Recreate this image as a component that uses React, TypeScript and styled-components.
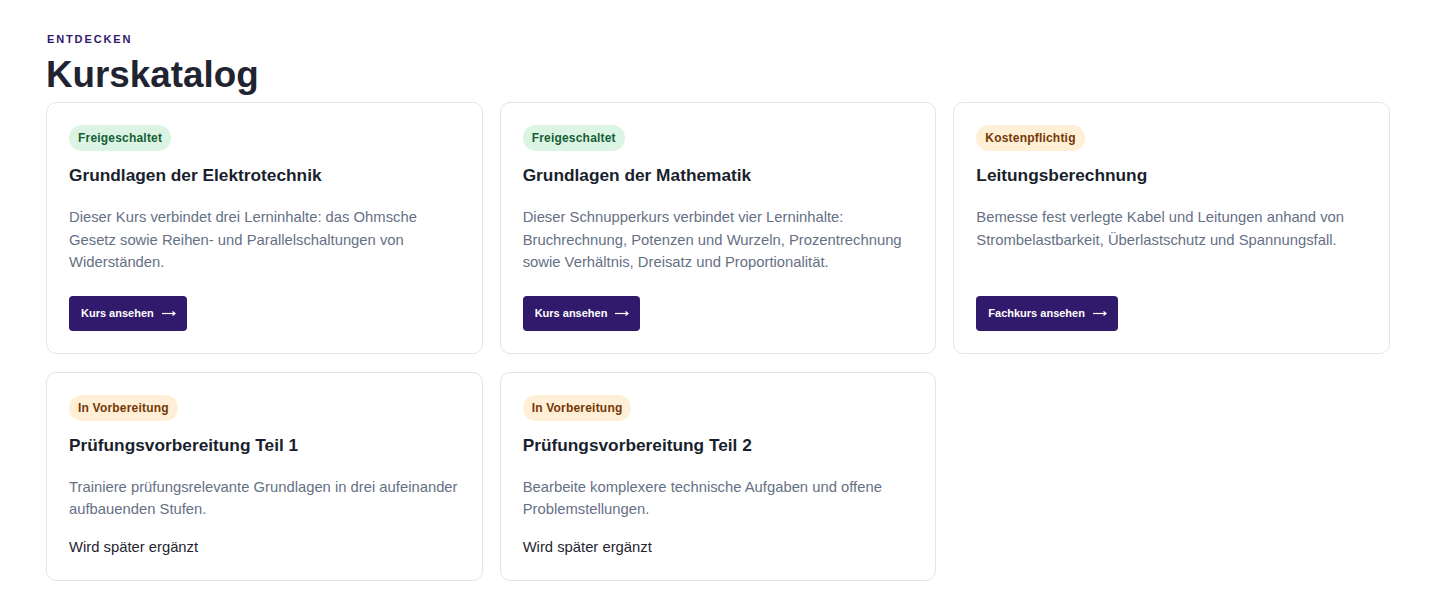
import styled, { createGlobalStyle } from 'styled-components';

type Status = 'open' | 'paid' | 'pending';

interface Course {
  title: string;
  status: Status;
  text: string;
  action?: string;
}

const statusLabel: Record<Status, string> = {
  open: 'Freigeschaltet',
  paid: 'Kostenpflichtig',
  pending: 'In Vorbereitung',
};

const courses: Course[] = [
  {
    title: 'Grundlagen der Elektrotechnik',
    status: 'open',
    text: 'Dieser Kurs verbindet drei Lerninhalte: das Ohmsche Gesetz sowie Reihen- und Parallelschaltungen von Widerständen.',
    action: 'Kurs ansehen',
  },
  {
    title: 'Grundlagen der Mathematik',
    status: 'open',
    text: 'Dieser Schnupperkurs verbindet vier Lerninhalte: Bruchrechnung, Potenzen und Wurzeln, Prozentrechnung sowie Verhältnis, Dreisatz und Proportionalität.',
    action: 'Kurs ansehen',
  },
  {
    title: 'Leitungsberechnung',
    status: 'paid',
    text: 'Bemesse fest verlegte Kabel und Leitungen anhand von Strombelastbarkeit, Überlastschutz und Spannungsfall.',
    action: 'Fachkurs ansehen',
  },
  {
    title: 'Prüfungsvorbereitung Teil 1',
    status: 'pending',
    text: 'Trainiere prüfungsrelevante Grundlagen in drei aufeinander aufbauenden Stufen.',
  },
  {
    title: 'Prüfungsvorbereitung Teil 2',
    status: 'pending',
    text: 'Bearbeite komplexere technische Aufgaben und offene Problemstellungen.',
  },
];

function ArrowIcon() {
  return (
    <svg width='14' height='8' viewBox='0 0 14 8' fill='none'>
      <path d='M0 4.5h12.5' stroke='currentColor' strokeWidth='1.2' />
      <path d='M10.5 2.5l2.5 2-2.5 2' stroke='currentColor' strokeWidth='1.2' fill='none' />
    </svg>
  );
}

function App() {
  return (
    <>
      <GlobalStyle />
      <Page>
        <Eyebrow>Entdecken</Eyebrow>
        <Heading>Kurskatalog</Heading>
        <Grid>
          {courses.map((course) => (
            <Card key={course.title}>
              <Badge $status={course.status}>{statusLabel[course.status]}</Badge>
              <Title>{course.title}</Title>
              <Description>{course.text}</Description>
              {course.action ? (
                <Footer>
                  <ActionButton type='button'>
                    {course.action}
                    <ArrowIcon />
                  </ActionButton>
                </Footer>
              ) : (
                <Note>Wird später ergänzt</Note>
              )}
            </Card>
          ))}
        </Grid>
      </Page>
    </>
  );
}

const GlobalStyle = createGlobalStyle`
  * {
    box-sizing: border-box;
  }
  body {
    margin: 0;
    background: #ffffff;
    font-family: 'Liberation Sans', Arial, sans-serif;
    color: #1c2130;
  }
`;

const Page = styled.main`
  width: 1344px;
  margin-left: 46px;
  padding-top: 32px;
`;

const Eyebrow = styled.div`
  padding-left: 1px;
  font-size: 11px;
  line-height: 14px;
  font-weight: 700;
  letter-spacing: 0.17em;
  text-transform: uppercase;
  color: #2e1a6b;
`;

const Heading = styled.h1`
  margin: 8px 0 6px;
  font-size: 36.8px;
  line-height: 42px;
  font-weight: 700;
  color: #1f2430;
`;

const Grid = styled.div`
  display: grid;
  grid-template-columns: repeat(3, 1fr);
  column-gap: 17px;
  row-gap: 18px;
`;

const Card = styled.article`
  display: flex;
  flex-direction: column;
  align-items: flex-start;
  padding: 22px;
  border: 1px solid #e3e5ea;
  border-radius: 10px;
  background: #ffffff;
`;

const badgeColors: Record<Status, { bg: string; fg: string }> = {
  open: { bg: '#dcf4e4', fg: '#155e34' },
  paid: { bg: '#feefd6', fg: '#733806' },
  pending: { bg: '#feefd6', fg: '#733806' },
};

const Badge = styled.span<{ $status: Status }>`
  display: inline-flex;
  align-items: center;
  height: 26px;
  padding: 0 9px;
  border-radius: 999px;
  font-size: 12px;
  font-weight: 700;
  letter-spacing: 0.2px;
  background: ${({ $status }) => badgeColors[$status].bg};
  color: ${({ $status }) => badgeColors[$status].fg};
`;

const Title = styled.h2`
  margin: 12px 0 0;
  font-size: 17.3px;
  line-height: 24px;
  font-weight: 700;
  color: #1a1f2e;
`;

const Description = styled.p`
  margin: 19px 0 0;
  font-size: 14.8px;
  line-height: 22.6px;
  color: #667085;
`;

const Footer = styled.div`
  margin-top: auto;
  padding-top: 22px;
`;

const ActionButton = styled.button`
  display: inline-flex;
  align-items: center;
  gap: 8px;
  height: 35px;
  padding: 0 11px 0 12px;
  border: none;
  border-radius: 4px;
  background: #311a6b;
  color: #ffffff;
  font-family: inherit;
  font-size: 11px;
  font-weight: 700;
  cursor: pointer;
`;

const Note = styled.p`
  margin: 15px 0 0;
  font-size: 14.8px;
  line-height: 22px;
  color: #1f2430;
`;

export default App;
